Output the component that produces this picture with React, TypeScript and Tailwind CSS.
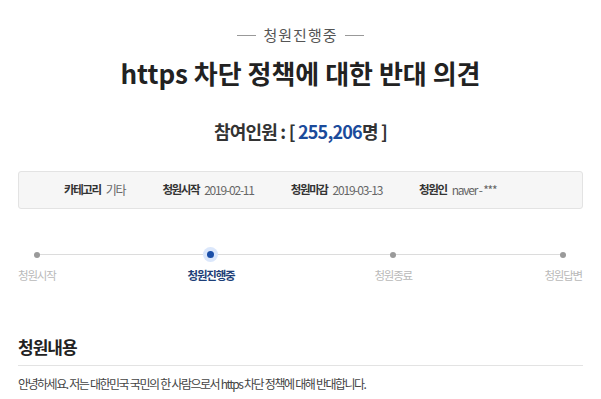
const font = { fontFamily: '"Noto Sans CJK KR", "Noto Sans", sans-serif' };

const info = [
  { label: '카테고리', value: '기타' },
  { label: '청원시작', value: '2019-02-11' },
  { label: '청원마감', value: '2019-03-13' },
  { label: '청원인', value: 'naver - ***' },
];

const steps = [
  { name: '청원시작', active: false, cls: '' },
  { name: '청원진행중', active: true, cls: 'ml-[132px]' },
  { name: '청원종료', active: false, cls: 'ml-[140px]' },
  { name: '청원답변', active: false, cls: 'ml-auto mr-px' },
];

export default function App() {
  return (
    <div className="w-[601px] h-[399px] bg-white overflow-hidden px-[18px]" style={font}>
      {/* Status */}
      <div className="flex items-center justify-center gap-[7px] pt-[25px] text-[15px] leading-[20px] text-[#555] tracking-[1px]">
        <span className="w-[19px] h-px bg-[#999]"></span>
        <span>청원진행중</span>
        <span className="w-[19px] h-px bg-[#999]"></span>
      </div>

      <h1 className="mt-[13px] text-center text-[26px] leading-[30px] font-bold text-[#222]">
        https 차단 정책에 대한 반대 의견
      </h1>

      <div className="mt-[31px] text-center text-[18px] leading-[24px] font-bold text-[#333] tracking-[-0.8px]">
        참여인원 : [ <span className="text-[#1b4b9b]">255,206</span>명 ]
      </div>

      {/* Info box */}
      <div className="mt-[28px] h-[38px] flex items-center gap-[37px] pl-[45px] bg-[#f6f6f6] border border-[#e3e3e3] rounded-[3px]">
        {info.map((item) => (
          <div key={item.label} className="flex items-center gap-[5px]">
            <span className="font-bold text-[#333] text-[11.5px] tracking-[-1.4px]">{item.label}</span>
            <span className="text-[#666] text-[12px] tracking-[-1.2px]">{item.value}</span>
          </div>
        ))}
      </div>

      {/* Progress */}
      <div className="relative mt-[36px]">
        <div className="absolute left-[19px] right-[21px] top-[9px] h-px bg-[#dcdcdc]"></div>
        <div className="relative flex">
          {steps.map((s) => (
            <div key={s.name} className={`flex flex-col items-center ${s.cls}`}>
              <div className="h-[19px] flex items-center justify-center">
                {s.active ? (
                  <div className="w-[15px] h-[15px] rounded-full bg-[#dbe7fb] flex items-center justify-center">
                    <div className="w-[7px] h-[7px] rounded-full bg-[#1b4fa8]"></div>
                  </div>
                ) : (
                  <div className="w-[6px] h-[6px] rounded-full bg-[#9a9a9a]"></div>
                )}
              </div>
              <span
                className={`mt-[2px] text-[11.5px] leading-[18px] tracking-[-1.2px] ${
                  s.active ? 'font-bold text-[#1e3f78]' : 'text-[#b9b9b9]'
                }`}
              >
                {s.name}
              </span>
            </div>
          ))}
        </div>
      </div>

      {/* Content */}
      <h2 className="mt-[52px] text-[17px] leading-[22px] font-bold text-[#222] tracking-[-1px]">청원내용</h2>
      <div className="mt-[7px] h-px bg-[#e3e3e3]"></div>
      <p className="mt-[9px] text-[12px] leading-[18px] text-[#444] tracking-[-1.5px] [word-spacing:0.5px]">
        안녕하세요. 저는 대한민국 국민의 한 사람으로서 https 차단 정책에 대해 반대합니다.
      </p>
    </div>
  );
}
